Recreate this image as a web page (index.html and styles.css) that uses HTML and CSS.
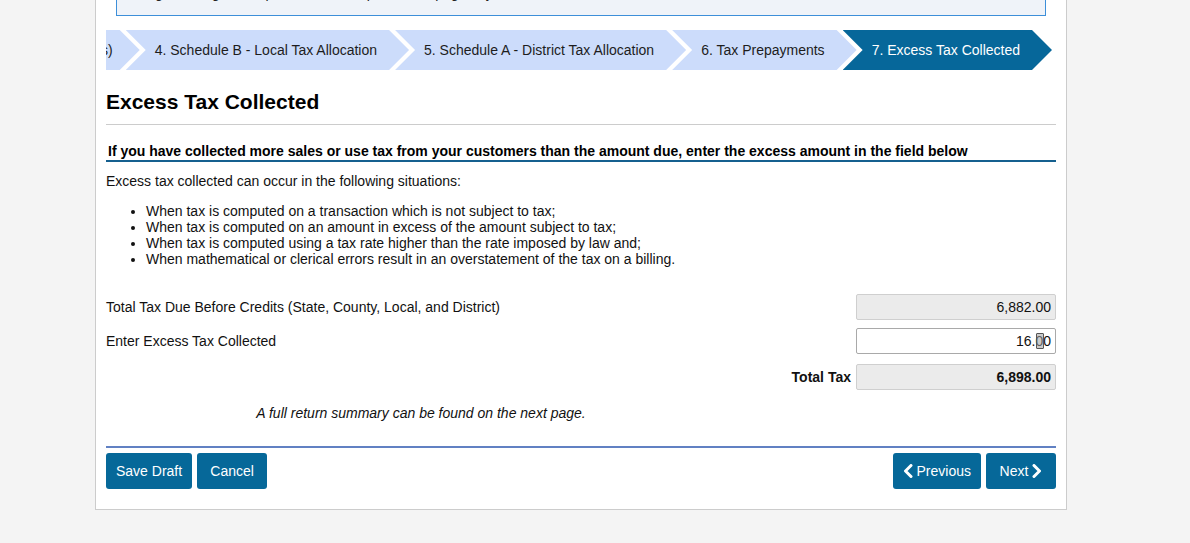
FILE: index.html
```html
<!DOCTYPE html>
<html lang="en">
<head>
<meta charset="utf-8">
<title>Excess Tax Collected</title>
<link rel="stylesheet" href="styles.css">
</head>
<body>
<div class="panel">
  <div class="info">Navigate using the steps below to complete each page of your return.</div>

  <div class="steps-wrap">
    <div class="steps">
      <div class="step first">3. Schedule C - Detailed Allocation by Suboutlets)</div>
      <div class="step">4. Schedule B - Local Tax Allocation</div>
      <div class="step">5. Schedule A - District Tax Allocation</div>
      <div class="step">6. Tax Prepayments</div>
      <div class="step active">7. Excess Tax Collected</div>
    </div>
  </div>

  <h1 class="title">Excess Tax Collected</h1>
  <hr class="rule">

  <h2 class="subhead">If you have collected more sales or use tax from your customers than the amount due, enter the excess amount in the field below</h2>
  <p class="intro">Excess tax collected can occur in the following situations:</p>
  <ul class="situations">
    <li>When tax is computed on a transaction which is not subject to tax;</li>
    <li>When tax is computed on an amount in excess of the amount subject to tax;</li>
    <li>When tax is computed using a tax rate higher than the rate imposed by law and;</li>
    <li>When mathematical or clerical errors result in an overstatement of the tax on a billing.</li>
  </ul>

  <div class="form">
    <div class="row">
      <div class="label">Total Tax Due Before Credits (State, County, Local, and District)</div>
      <div class="field readonly">6,882.00</div>
    </div>
    <div class="row">
      <div class="label">Enter Excess Tax Collected</div>
      <div class="field editable">16.00<span class="cursor"></span></div>
    </div>
    <div class="row total">
      <div class="label total-label">Total Tax</div>
      <div class="field readonly strong">6,898.00</div>
    </div>
  </div>

  <div class="note-grid">
    <p class="note">A full return summary can be found on the next page.</p>
  </div>

  <div class="actions">
    <div class="group">
      <button class="btn">Save Draft</button>
      <button class="btn">Cancel</button>
    </div>
    <div class="group">
      <button class="btn"><svg class="chev" width="10" height="14" viewBox="0 0 10 14"><polyline points="8,1.5 2.5,7 8,12.5" fill="none" stroke="#fff" stroke-width="3" stroke-linecap="round" stroke-linejoin="round"/></svg>Previous</button>
      <button class="btn">Next<svg class="chev right" width="10" height="14" viewBox="0 0 10 14"><polyline points="2,1.5 7.5,7 2,12.5" fill="none" stroke="#fff" stroke-width="3" stroke-linecap="round" stroke-linejoin="round"/></svg></button>
    </div>
  </div>
</div>
</body>
</html>
```

FILE: styles.css
```css
html, body {
  margin: 0;
  padding: 0;
}
body {
  background: #f4f4f4;
  font-family: "Liberation Sans", Arial, Helvetica, sans-serif;
  font-size: 14px;
  line-height: 16px;
  color: #111;
}
.panel {
  box-sizing: border-box;
  width: 972px;
  margin: -33px 0 0 95px;
  padding: 10px 10px 20px 10px;
  background: #fff;
  border: 1px solid #cccccc;
}
.info {
  margin: 0 10px;
  padding: 6px 10px 14px;
  background: #eff3f9;
  border: 1px solid #3d8fd9;
  color: #222;
}
.steps-wrap {
  margin-top: 14px;
  overflow: hidden;
  height: 40px;
}
.steps {
  display: flex;
  justify-content: flex-end;
  padding-right: 4px;
  height: 40px;
}
.step {
  flex-shrink: 0;
  height: 40px;
  line-height: 40px;
  padding: 0 32px 0 29px;
  margin-right: -14px;
  background: #ccdcfb;
  color: #1d1d1d;
  white-space: nowrap;
  clip-path: polygon(0 0, calc(100% - 20px) 0, 100% 50%, calc(100% - 20px) 100%, 0 100%, 20px 50%);
}
.step.first {
  padding-right: 27px;
}
.step:last-child {
  margin-right: 0;
}
.step.active {
  background: #06679a;
  color: #fff;
}
.title {
  margin: 20px 0 0;
  font-size: 21px;
  line-height: 24px;
  font-weight: bold;
  color: #000;
}
.rule {
  margin: 10px 0 0;
  border: 0;
  height: 1px;
  background: #cccccc;
}
.subhead {
  margin: 19px 0 0;
  padding: 0 0 1px 2px;
  font-size: 14px;
  line-height: 15px;
  font-weight: bold;
  color: #000;
  border-bottom: 2px solid #15608f;
}
.intro {
  margin: 11px 0 0;
}
.situations {
  margin: 14px 0 0;
  padding-left: 40px;
}
.form {
  margin-top: 27px;
}
.row {
  display: grid;
  grid-template-columns: 1fr 200px;
  align-items: center;
  margin-bottom: 8px;
}
.row.total {
  margin-top: 10px;
  margin-bottom: 0;
}
.label {
  color: #111;
}
.total-label {
  text-align: right;
  font-weight: bold;
  padding-right: 5px;
}
.field {
  position: relative;
  box-sizing: border-box;
  height: 26px;
  line-height: 24px;
  padding: 0 4px;
  text-align: right;
  border-radius: 2px;
  color: #111;
}
.readonly {
  background: #ebebeb;
  border: 1px solid #cfcfcf;
}
.editable {
  background: #fff;
  border: 1px solid #a9a9a9;
}
.strong {
  font-weight: bold;
}
.cursor {
  position: absolute;
  right: 11px;
  top: 4px;
  width: 6px;
  height: 14px;
  background: rgba(160, 160, 160, 0.55);
  border: 1px solid #555;
  border-radius: 1px;
}
.note-grid {
  display: grid;
  grid-template-columns: 630px 1fr;
}
.note {
  margin: 15px 0 0;
  text-align: center;
  font-style: italic;
}
.actions {
  margin-top: 25px;
  padding-top: 5px;
  border-top: 2px solid #6181c3;
  display: flex;
  justify-content: space-between;
}
.group {
  display: flex;
  gap: 5px;
}
.btn {
  display: flex;
  align-items: center;
  justify-content: center;
  gap: 4px;
  box-sizing: border-box;
  height: 36px;
  min-width: 70px;
  padding: 0 10px;
  border: 0;
  border-radius: 3px;
  background: #066899;
  color: #fff;
  font-family: "Liberation Sans", Arial, Helvetica, sans-serif;
  font-size: 14px;
  line-height: 16px;
}
.chev {
  display: block;
  flex-shrink: 0;
}
```
